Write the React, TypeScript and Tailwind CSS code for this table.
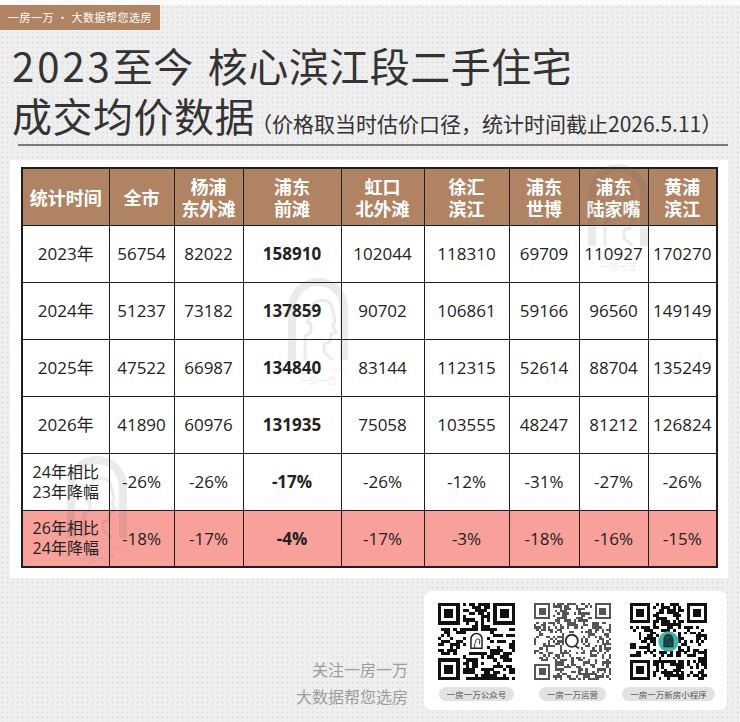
import { useMemo } from 'react';

const columns = [
  { w: 'w-[87px]', label: ['统计时间'] },
  { w: 'w-[65px]', label: ['全市'] },
  { w: 'w-[69px]', label: ['杨浦', '东外滩'] },
  { w: 'w-[98px]', label: ['浦东', '前滩'] },
  { w: 'w-[83px]', label: ['虹口', '北外滩'] },
  { w: 'w-[85px]', label: ['徐汇', '滨江'] },
  { w: 'w-[70px]', label: ['浦东', '世博'] },
  { w: 'w-[69px]', label: ['浦东', '陆家嘴'] },
  { w: 'w-[69px]', label: ['黄浦', '滨江'] },
];

const rows = [
  { label: ['2023年'], values: ['56754', '82022', '158910', '102044', '118310', '69709', '110927', '170270'] },
  { label: ['2024年'], values: ['51237', '73182', '137859', '90702', '106861', '59166', '96560', '149149'] },
  { label: ['2025年'], values: ['47522', '66987', '134840', '83144', '112315', '52614', '88704', '135249'] },
  { label: ['2026年'], values: ['41890', '60976', '131935', '75058', '103555', '48247', '81212', '126824'] },
  { label: ['24年相比', '23年降幅'], values: ['-26%', '-26%', '-17%', '-26%', '-12%', '-31%', '-27%', '-26%'] },
  { label: ['26年相比', '24年降幅'], values: ['-18%', '-17%', '-4%', '-17%', '-3%', '-18%', '-16%', '-15%'], pink: true },
];

function Watermark({ className }: { className: string }) {
  return (
    <svg viewBox="0 0 70 112" className={`absolute pointer-events-none ${className}`}>
      <path d="M9 84 V32 A26 26 0 0 1 61 32 V84" fill="none" stroke="rgba(90,90,90,0.13)" strokeWidth="8" />
      <path
        d="M22 84 V60 L28 56 V48 L24 46 L28 40 V32 A12 12 0 0 1 48 28 L52 44 L50 50 L53 56 L48 58 L47 66 L41 68 V76 L50 84"
        fill="none"
        stroke="rgba(90,90,90,0.12)"
        strokeWidth="3"
        strokeLinejoin="round"
      />
      <text x="35" y="96" textAnchor="middle" fontSize="6" letterSpacing="1" fill="rgba(90,90,90,0.16)" fontFamily="'Liberation Sans', sans-serif">
        YI FANG YI WAN
      </text>
      <text x="35" y="108" textAnchor="middle" fontSize="9" fill="rgba(90,90,90,0.16)" fontFamily="'Noto Sans CJK SC', sans-serif">
        一房一万
      </text>
    </svg>
  );
}

function ArchLogo({ x, y, s, fill, stroke }: { x: number; y: number; s: number; fill: string; stroke: string }) {
  return (
    <g transform={`translate(${x} ${y}) scale(${s})`}>
      <path d="M1 9 V4 A3 3 0 0 1 7 4 V9 Z" fill={fill} stroke={stroke} strokeWidth="0.8" />
      <path d="M3 9 V6.5 L3.6 6 V4.6 A1.4 1.4 0 0 1 5.8 4.4 L5.6 6.8" fill="none" stroke={stroke} strokeWidth="0.5" />
    </g>
  );
}

function QRCode({ seed, n, color, density, center }: { seed: number; n: number; color: string; density: number; center: 'arch' | 'chat' | 'teal' }) {
  const cells = useMemo(() => {
    let s = seed;
    const rnd = () => {
      s = (s * 1103515245 + 12345) % 2147483648;
      return s / 2147483648;
    };
    const out: [number, number][] = [];
    const c0 = Math.floor(n / 2) - 3;
    const c1 = Math.floor(n / 2) + 3;
    for (let y = 0; y < n; y++) {
      for (let x = 0; x < n; x++) {
        const r = rnd();
        if (x < 8 && y < 8) continue;
        if (x >= n - 8 && y < 8) continue;
        if (x < 8 && y >= n - 8) continue;
        if (x >= c0 && x <= c1 && y >= c0 && y <= c1) continue;
        if (r < density) out.push([x, y]);
      }
    }
    return out;
  }, [seed, n, density]);

  const finder = (fx: number, fy: number) => (
    <g key={`${fx}-${fy}`}>
      <rect x={fx} y={fy} width={7} height={7} fill={color} />
      <rect x={fx + 1} y={fy + 1} width={5} height={5} fill="white" />
      <rect x={fx + 2} y={fy + 2} width={3} height={3} fill={color} />
    </g>
  );
  const mid = n / 2;

  return (
    <svg viewBox={`0 0 ${n} ${n}`} className="w-[77px] h-[77px]" shapeRendering="crispEdges">
      <rect width={n} height={n} fill="white" />
      {cells.map(([x, y]) => (
        <rect key={`${x}-${y}`} x={x} y={y} width={1.02} height={1.02} fill={color} />
      ))}
      {finder(0, 0)}
      {finder(n - 7, 0)}
      {finder(0, n - 7)}
      <g shapeRendering="auto">
        {center === 'arch' && <ArchLogo x={mid - 2.4} y={mid - 3.2} s={0.6} fill="white" stroke="#222" />}
        {center === 'chat' && (
          <g fill="none" stroke="#333" strokeWidth="0.8">
            <circle cx={mid - 0.3} cy={mid - 0.3} r={2.6} />
            <path d={`M${mid + 1.2} ${mid + 1.8} L${mid + 2.8} ${mid + 3}`} />
          </g>
        )}
        {center === 'teal' && (
          <g>
            <circle cx={mid} cy={mid} r={3.6} fill="#3fb6a8" />
            <ArchLogo x={mid - 2.1} y={mid - 2.9} s={0.52} fill="#1f4d48" stroke="#0f2e2a" />
          </g>
        )}
      </g>
    </svg>
  );
}

export default function App() {
  return (
    <div
      className="w-[740px] h-[722px] overflow-hidden bg-[#efefef] bg-[radial-gradient(circle,#d8d8d8_0.8px,transparent_1.1px)] bg-[length:5px_5px] text-[#222]"
      style={{ fontFamily: "'Noto Sans CJK SC', sans-serif" }}
    >
      <div className="h-[5px] bg-[#fafafa]" />
      <div className="w-[160px] h-[25px] bg-[#b08462] text-white text-[11px] leading-[25px] pl-[8px] tracking-[0.5px] whitespace-nowrap">
        一房一万 • 大数据帮您选房
      </div>

      <div className="mt-[10px] pl-[12px] text-[#333] text-[40px] leading-[50px]">
        <div className="h-[50px] whitespace-nowrap tracking-[0.5px]">
          <span className="tracking-[3px]">2023</span>
          <span>至今</span>
          <span className="ml-[14px]">核心滨江段二手住宅</span>
        </div>
        <div className="h-[50px] whitespace-nowrap tracking-[0.5px]">
          <span>成交均价数据</span>
          <span className="text-[21px] leading-none ml-[-4px] tracking-[0px] align-baseline">
            （价格取当时估价口径，统计时间截止2026.5.11）
          </span>
        </div>
      </div>
      <div className="mt-[4px] ml-[18px] mr-[12px] h-[2px] bg-[#7a7a7a]" />

      <div className="relative mt-[14px] ml-[10px] mr-[12px] bg-white pt-[7px] pb-[10px] pl-[11px]">
        <table className="table-fixed border-collapse border-2 border-[#1e1e1e] w-[695px]">
          <thead>
            <tr className="h-[57px] bg-[#b08462] text-white">
              {columns.map((c, i) => (
                <th key={i} className={`${c.w} border border-[#1e1e1e] p-0 text-[18px] leading-[22px] font-bold text-center`}>
                  {c.label.map((l) => (
                    <div key={l}>{l}</div>
                  ))}
                </th>
              ))}
            </tr>
          </thead>
          <tbody style={{ fontFamily: "'Open Sans', 'Noto Sans CJK SC', sans-serif" }}>
            {rows.map((r, ri) => (
              <tr key={ri} className={`h-[57px] ${r.pink ? 'bg-[#f8a19b]' : 'bg-white'}`}>
                <td className="border border-[#1e1e1e] p-0 text-center text-[16px] leading-[20px]">
                  {r.label.map((l) => (
                    <div key={l} className={r.label.length === 1 ? 'text-[17px]' : ''}>
                      {l}
                    </div>
                  ))}
                </td>
                {r.values.map((v, vi) => (
                  <td
                    key={vi}
                    className={`border border-[#1e1e1e] p-0 text-center text-[17px] ${vi === 2 ? 'font-bold' : ''}`}
                  >
                    {v}
                  </td>
                ))}
              </tr>
            ))}
          </tbody>
        </table>
        <Watermark className="left-[573px] top-[2px] w-[70px]" />
        <Watermark className="left-[273px] top-[116px] w-[70px]" />
        <Watermark className="left-[52px] top-[294px] w-[70px]" />
      </div>

      <div className="mt-[13px] flex justify-end items-end gap-[16px] pr-[13px]">
        <div className="text-right text-[16px] leading-[27px] text-[#9c9c9c]">
          <div>关注一房一万</div>
          <div>大数据帮您选房</div>
        </div>
        <div className="bg-white rounded-[8px] flex gap-[19px] pl-[14px] pr-[20px] pt-[12px] pb-[9px]">
          {[
            { seed: 7, n: 25, color: '#111', density: 0.5, center: 'arch' as const, label: '一房一万公众号' },
            { seed: 31, n: 33, color: '#555', density: 0.4, center: 'chat' as const, label: '一房一万运营' },
            { seed: 99, n: 27, color: '#111', density: 0.5, center: 'teal' as const, label: '一房一万新房小程序' },
          ].map((q) => (
            <div key={q.label} className="w-[77px] flex flex-col items-center">
              <QRCode seed={q.seed} n={q.n} color={q.color} density={q.density} center={q.center} />
              <div className="mt-[7px] h-[14px] px-[8px] rounded-full bg-[#e2e2e2] text-[#555] text-[8.5px] leading-[14px] whitespace-nowrap">
                {q.label}
              </div>
            </div>
          ))}
        </div>
      </div>
    </div>
  );
}
